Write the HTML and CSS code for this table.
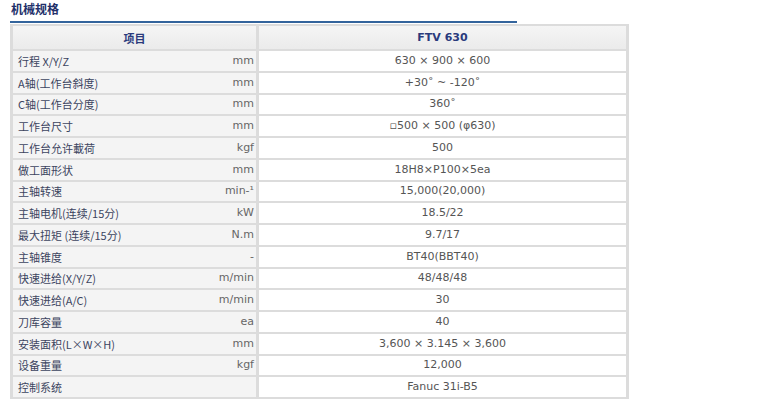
FILE: index.html
```html
<!DOCTYPE html>
<html lang="zh">
<head>
<meta charset="utf-8">
<title>机械规格</title>
<link rel="stylesheet" href="styles.css">
</head>
<body>
<div class="spec">
  <h2 class="spec-title">机械规格</h2>
  <table class="spec-table">
    <thead>
      <tr><th>项目</th><th>FTV 630</th></tr>
    </thead>
    <tbody>
      <tr><td class="label">行程 X/Y/Z<span class="unit">mm</span></td><td class="val">630 × 900 × 600</td></tr>
      <tr><td class="label">A轴(工作台斜度)<span class="unit">mm</span></td><td class="val">+30˚ ~ -120˚</td></tr>
      <tr><td class="label">C轴(工作台分度)<span class="unit">mm</span></td><td class="val">360˚</td></tr>
      <tr><td class="label">工作台尺寸<span class="unit">mm</span></td><td class="val">▫500 × 500 (φ630)</td></tr>
      <tr><td class="label">工作台允许載荷<span class="unit">kgf</span></td><td class="val">500</td></tr>
      <tr><td class="label">做工面形状<span class="unit">mm</span></td><td class="val">18H8×P100×5ea</td></tr>
      <tr><td class="label">主轴转速<span class="unit">min-¹</span></td><td class="val">15,000(20,000)</td></tr>
      <tr><td class="label">主轴电机(连续/15分)<span class="unit">kW</span></td><td class="val">18.5/22</td></tr>
      <tr><td class="label">最大扭矩 (连续/15分)<span class="unit">N.m</span></td><td class="val">9.7/17</td></tr>
      <tr><td class="label">主轴锥度<span class="unit">-</span></td><td class="val">BT40(BBT40)</td></tr>
      <tr><td class="label">快速进给(X/Y/Z)<span class="unit">m/min</span></td><td class="val">48/48/48</td></tr>
      <tr><td class="label">快速进给(A/C)<span class="unit">m/min</span></td><td class="val">30</td></tr>
      <tr><td class="label">刀库容量<span class="unit">ea</span></td><td class="val">40</td></tr>
      <tr><td class="label">安装面积(L×W×H)<span class="unit">mm</span></td><td class="val">3,600 × 3.145 × 3,600</td></tr>
      <tr><td class="label">设备重量<span class="unit">kgf</span></td><td class="val">12,000</td></tr>
      <tr><td class="label">控制系统</td><td class="val">Fanuc 31i-B5</td></tr>
    </tbody>
  </table>
</div>
</body>
</html>
```

FILE: styles.css
```css
html, body {
  margin: 0;
  padding: 0;
  background: #ffffff;
}

body {
  font-family: "DejaVu Sans", "Noto Sans CJK SC", sans-serif;
  font-size: 11px;
  color: #555555;
}

.spec {
  padding: 2px 0 0 10px;
}

.spec-title {
  margin: 0;
  width: 506px;
  padding: 0 0 5px 1px;
  font-family: "Noto Sans CJK SC", sans-serif;
  font-size: 12px;
  line-height: 14px;
  font-weight: bold;
  color: #22306a;
  border-bottom: 2px solid #33649c;
}

.spec-table {
  margin-top: 1px;
  border-collapse: separate;
  border-spacing: 3px 2px;
  background: #dcdcdc;
  width: 619px;
  table-layout: fixed;
}

.spec-table th {
  height: 23px;
  padding: 0;
  font-family: "DejaVu Sans", "Noto Sans CJK SC", sans-serif;
  font-size: 11px;
  font-weight: bold;
  color: #2a3a7c;
  text-align: center;
  background: linear-gradient(#f5f5f5, #ebebeb);
}

.spec-table th:first-child {
  width: 243px;
}

.spec-table td {
  height: 19.75px;
  padding: 0;
  line-height: 14px;
  vertical-align: middle;
}

.label {
  background: #f4f4f4;
  padding: 0 2px 0 5px !important;
  color: #3c4460;
  font-family: "Noto Sans CJK SC", sans-serif;
  font-size: 11px;
}

.unit {
  float: right;
  color: #666666;
  font-family: "DejaVu Sans", sans-serif;
  font-size: 11px;
}

.val {
  background: #ffffff;
  text-align: center;
  color: #555555;
}
```
